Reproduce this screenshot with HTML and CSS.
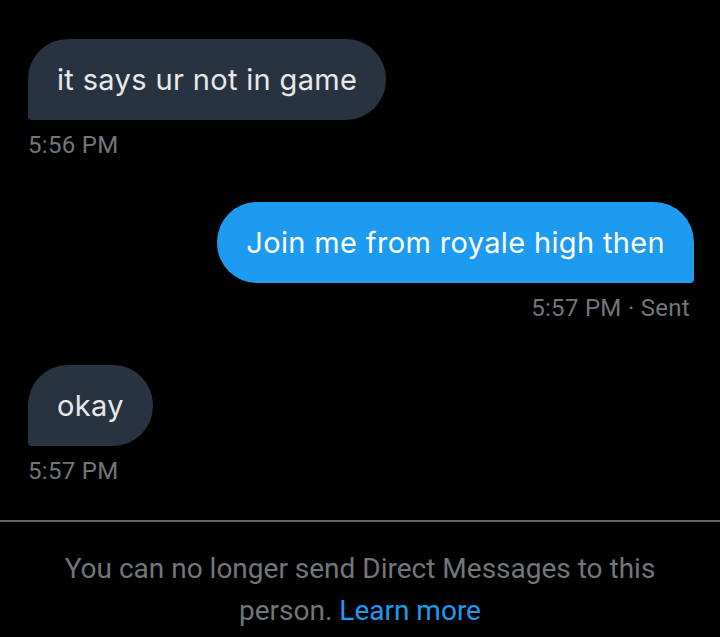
FILE: index.html
```html
<!DOCTYPE html>
<html lang="en">
<head>
    <meta charset="UTF-8">
    <meta name="viewport" content="width=device-width, initial-scale=1.0">
    <title>Messages</title>
    <link rel="stylesheet" href="styles.css">
</head>
<body>
    <div class="conversacion">
        <div class="mensaje recibido">
            <div class="burbuja">it says ur not in game</div>
            <div class="hora">5:56 PM</div>
        </div>

        <div class="mensaje enviado">
            <div class="burbuja">Join me from royale high then</div>
            <div class="hora">5:57 PM · Sent</div>
        </div>

        <div class="mensaje recibido">
            <div class="burbuja">okay</div>
            <div class="hora">5:57 PM</div>
        </div>
    </div>

    <div class="aviso">
        You can no longer send Direct Messages to this person. <a href="#">Learn more</a>
    </div>
</body>
</html>
```

FILE: styles.css
```css
body {
    margin: 0;
    padding: 0;
    background-color: #000;
    color: #e7e9ea;
    font-family: 'Roboto', sans-serif;
}

.conversacion {
    padding: 39px 28px 0 28px;
}

.mensaje {
    display: flex;
    flex-direction: column;
    margin-bottom: 43px;
}

.mensaje:last-child {
    margin-bottom: 0;
}

.recibido {
    align-items: flex-start;
}

.enviado {
    align-items: flex-end;
}

.burbuja {
    font-family: 'Inter', sans-serif;
    font-size: 29px;
    letter-spacing: 0.35px;
    line-height: 35px;
    padding: 23px 29px;
    border-radius: 40px;
}

.recibido .burbuja {
    background-color: #273340;
    color: #e7e9ea;
    border-bottom-left-radius: 4px;
}

.enviado .burbuja {
    background-color: #1d9bf0;
    color: #fff;
    border-bottom-right-radius: 4px;
    margin-right: -2px;
}

.hora {
    margin-top: 11px;
    font-size: 24px;
    letter-spacing: 0.3px;
    line-height: 28px;
    color: #71767b;
}

.enviado .hora {
    margin-right: 2px;
}

.aviso {
    margin-top: 35px;
    border-top: 2px solid #5b656e;
    padding: 26px 50px 0 50px;
    text-align: center;
    font-size: 28px;
    line-height: 42px;
    color: #71767b;
}

.aviso a {
    color: #1d9bf0;
    text-decoration: none;
}
```
